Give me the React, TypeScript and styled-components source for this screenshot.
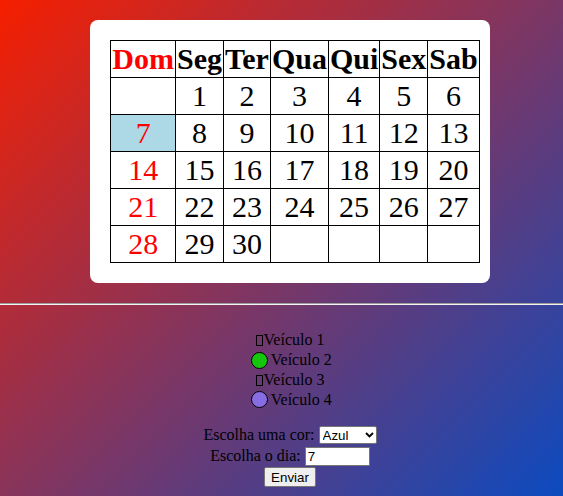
import React from "react";
import styled, { createGlobalStyle } from "styled-components";

const GlobalStyle = createGlobalStyle`
  html {
    min-height: 100%;
    background: linear-gradient(135deg, #f61f00 0%, #0c4bc0 100%);
    overflow: hidden;
  }
  body {
    margin: 0;
    font-family: "Liberation Serif", "Times New Roman", serif;
    font-size: 16px;
    color: #000;
  }
`;

const TopSection = styled.section`
  padding: 20px 0 20px 17px;
`;

const Card = styled.div`
  width: fit-content;
  margin: 0 auto;
  background: #fff;
  border-radius: 8px;
  padding: 20px 10px 20px 20px;
`;

const Calendar = styled.table`
  border-collapse: collapse;
  font-size: 30px;
  line-height: 34px;
`;

const HeadCell = styled.th<{ $sunday?: boolean }>`
  border: 1px solid #000;
  padding: 1px;
  font-weight: bold;
  text-align: center;
  color: ${(p) => (p.$sunday ? "#ff0000" : "#000")};
`;

const DayCell = styled.td<{ $sunday?: boolean; $selected?: boolean }>`
  border: 1px solid #000;
  padding: 1px;
  text-align: center;
  color: ${(p) => (p.$sunday ? "#ff0000" : "#000")};
  background: ${(p) => (p.$selected ? "#add8e6" : "transparent")};
`;

const Divider = styled.hr`
  margin: 0;
  height: 0;
  border: 0;
  border-top: 1px solid #9c9c9c;
  border-bottom: 1px solid #f4f4f4;
`;

const BottomSection = styled.section`
  padding: 26px 0 0 17px;
`;

const VehicleList = styled.div`
  display: flex;
  flex-direction: column;
  align-items: center;
`;

const VehicleRow = styled.div<{ $tall?: boolean }>`
  display: flex;
  align-items: center;
  height: ${(p) => (p.$tall ? "21.3px" : "18.5px")};
  white-space: nowrap;
`;

const Tofu = styled.span`
  display: inline-block;
  box-sizing: border-box;
  width: 7px;
  height: 11px;
  border: 1px solid #000;
  margin-right: 1px;
  margin-top: 1px;
`;

const Dot = styled.span<{ $color: string }>`
  display: inline-block;
  box-sizing: border-box;
  width: 17px;
  height: 17px;
  border-radius: 50%;
  border: 1.5px solid #000;
  background: ${(p) => p.$color};
  margin: 0 3px 0 2.4px;
`;

const Form = styled.form`
  margin-top: 14px;
  display: flex;
  flex-direction: column;
  align-items: center;
`;

const FormRow = styled.div`
  height: 21px;
  display: flex;
  align-items: center;
  justify-content: center;
  gap: 4px;
  white-space: nowrap;
`;

const SelectWrap = styled.span`
  position: relative;
  display: inline-flex;
`;

const Select = styled.select`
  appearance: none;
  -webkit-appearance: none;
  box-sizing: border-box;
  width: 58px;
  height: 18px;
  margin: 0;
  padding: 0 0 0 3px;
  border: 1px solid #767676;
  border-radius: 2px;
  background: #fff;
  color: #000;
  font-family: "Liberation Sans", Arial, sans-serif;
  font-size: 13.33px;
  outline: none;
`;

const Chevron = styled.svg`
  position: absolute;
  right: 3px;
  top: 6px;
  width: 9px;
  height: 6px;
  pointer-events: none;
`;

const TextInput = styled.input`
  box-sizing: border-box;
  width: 65px;
  height: 19px;
  margin: 0;
  padding: 1px 2px;
  border: 1px solid #767676;
  border-radius: 0;
  background: #fff;
  color: #000;
  font-family: "Liberation Sans", Arial, sans-serif;
  font-size: 13.33px;
  outline: none;
`;

const Button = styled.button`
  box-sizing: border-box;
  height: 20px;
  margin: 0;
  padding: 1px 6px;
  border: 1px solid #767676;
  border-radius: 2px;
  background: #efefef;
  color: #000;
  font-family: "Liberation Sans", Arial, sans-serif;
  font-size: 13.33px;
`;

const weekDays = ["Dom", "Seg", "Ter", "Qua", "Qui", "Sex", "Sab"];

const weeks: (number | null)[][] = [
  [null, 1, 2, 3, 4, 5, 6],
  [7, 8, 9, 10, 11, 12, 13],
  [14, 15, 16, 17, 18, 19, 20],
  [21, 22, 23, 24, 25, 26, 27],
  [28, 29, 30, null, null, null, null],
];

const selectedDay = 7;

export default function App() {
  return (
    <>
      <GlobalStyle />
      <TopSection>
        <Card>
          <Calendar>
            <thead>
              <tr>
                {weekDays.map((d, i) => (
                  <HeadCell key={d} $sunday={i === 0}>
                    {d}
                  </HeadCell>
                ))}
              </tr>
            </thead>
            <tbody>
              {weeks.map((week, wi) => (
                <tr key={wi}>
                  {week.map((day, di) => (
                    <DayCell
                      key={di}
                      $sunday={di === 0}
                      $selected={day === selectedDay}
                    >
                      {day ?? ""}
                    </DayCell>
                  ))}
                </tr>
              ))}
            </tbody>
          </Calendar>
        </Card>
      </TopSection>
      <Divider />
      <BottomSection>
        <VehicleList>
          <VehicleRow>
            <Tofu />
            Veículo 1
          </VehicleRow>
          <VehicleRow $tall>
            <Dot $color="#16c60c" />
            Veículo 2
          </VehicleRow>
          <VehicleRow>
            <Tofu />
            Veículo 3
          </VehicleRow>
          <VehicleRow $tall>
            <Dot $color="#886ce4" />
            Veículo 4
          </VehicleRow>
        </VehicleList>
        <Form onSubmit={(e) => e.preventDefault()}>
          <FormRow>
            <span>Escolha uma cor:</span>
            <SelectWrap>
              <Select defaultValue="azul">
                <option value="azul">Azul</option>
                <option value="verde">Verde</option>
                <option value="roxo">Roxo</option>
              </Select>
              <Chevron viewBox="0 0 9 6">
                <path
                  d="M1 1 L4.5 4.5 L8 1"
                  fill="none"
                  stroke="#000"
                  strokeWidth="1.8"
                />
              </Chevron>
            </SelectWrap>
          </FormRow>
          <FormRow>
            <span>Escolha o dia:</span>
            <TextInput type="text" defaultValue="7" />
          </FormRow>
          <FormRow>
            <Button type="submit">Enviar</Button>
          </FormRow>
        </Form>
      </BottomSection>
    </>
  );
}
